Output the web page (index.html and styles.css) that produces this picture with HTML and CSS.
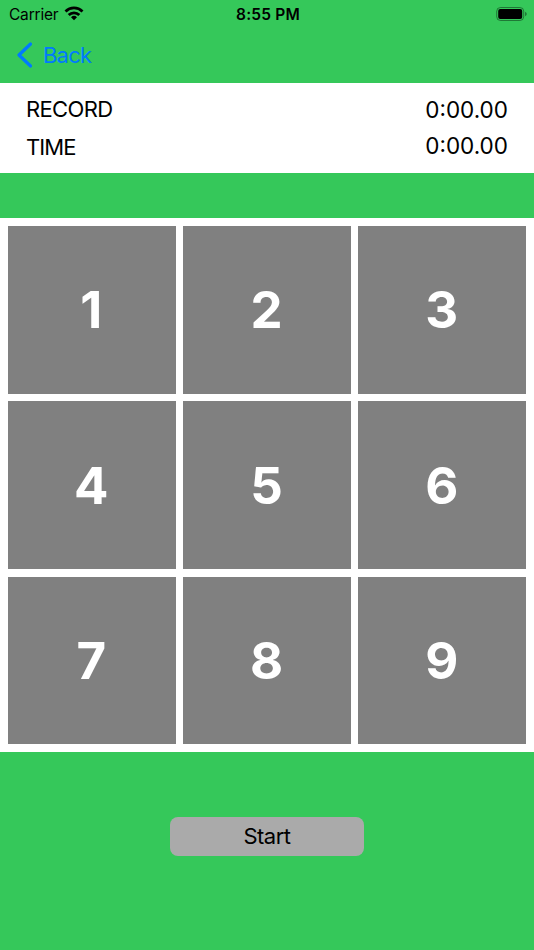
FILE: index.html
```html
<!DOCTYPE html>
<html lang="en">
<head>
<meta charset="utf-8">
<title>Record</title>
<link rel="stylesheet" href="styles.css">
</head>
<body>
<header class="status">
  <div class="carrier"><span class="carrier-name">Carrier</span>
    <svg class="wifi" width="20" height="15" viewBox="0 0 20 15"><path d="M10 14.2 7 11.2a4.3 4.3 0 0 1 6 0Z"/><path class="arc" d="M4.7 9a7.5 7.5 0 0 1 10.6 0M1.5 5.4a12.1 12.1 0 0 1 17 0"/></svg>
  </div>
  <div class="clock">8:55 PM</div>
  <svg class="battery" width="31" height="14" viewBox="0 0 31 14"><rect class="shell" x=".7" y=".5" width="27" height="13" rx="3.8"/><rect x="2.2" y="2" width="24" height="10" rx="2"/><path class="tip" d="M29 4.7q1.8.7 1.8 2.3T29 9.3Z"/></svg>
</header>
<nav class="nav"><a class="back"><svg width="16" height="26" viewBox="0 0 16 26"><path d="M14.5 2 3 13l11.5 11"/></svg><span>Back</span></a></nav>
<section class="scores">
  <div class="row"><span class="label">RECORD</span><span class="value">0:00.00</span></div>
  <div class="row"><span class="label time">TIME</span><span class="value">0:00.00</span></div>
</section>
<main class="grid">
  <div class="tile">1</div><div class="tile">2</div><div class="tile">3</div>
  <div class="tile">4</div><div class="tile">5</div><div class="tile">6</div>
  <div class="tile">7</div><div class="tile">8</div><div class="tile">9</div>
</main>
<button class="start">Start</button>
</body>
</html>
```
FILE: styles.css
```css
* { box-sizing: border-box; }
body { margin: 0; height: 950px; overflow: hidden; background: #35c85a; color: #000; font-family: Inter, sans-serif; display: flex; flex-direction: column; }
.status { height: 27px; padding: 0 7px 0 9px; display: grid; grid-template-columns: 1fr auto 1fr; align-items: center; font-size: 15.5px; }
.carrier { display: flex; align-items: center; gap: 6px; }
.carrier-name { padding-top: 1px; letter-spacing: -.2px; }
.wifi { margin-top: -1px; }
.wifi .arc { fill: none; stroke: #000; stroke-width: 2.8; }
.clock { padding-top: 1px; font-weight: 600; letter-spacing: .2px; }
.battery { justify-self: end; }
.battery .shell { fill: none; stroke: #000; stroke-opacity: .4; }
.battery .tip { fill-opacity: .4; }
.nav { height: 56px; padding: 0 16px; display: flex; align-items: center; }
.back { display: flex; align-items: center; gap: 11px; color: #007aff; font-size: 22px; letter-spacing: -.8px; }
.back svg { fill: none; stroke: #007aff; stroke-width: 3.2; stroke-linecap: round; stroke-linejoin: round; }
.back span { margin-top: -1px; }
.scores { height: 90px; padding: 8px 26px; background: #fff; }
.row { height: 36.5px; display: flex; align-items: center; justify-content: space-between; font-size: 22px; }
.label { letter-spacing: -.65px; }
.time { padding-top: 2px; letter-spacing: -.9px; }
.value { font-size: 22.5px; }
.grid { margin-top: 45px; height: 534px; padding: 8px 8px 7.5px; display: grid; grid-template-columns: repeat(3, 1fr); grid-template-rows: repeat(3, 1fr); gap: 7.6px; background: #fff; }
.tile { display: flex; align-items: center; justify-content: center; padding: 0 1px 0 0; background: #808080; color: #fff; font-size: 51px; font-weight: 700; }
.start { align-self: center; margin-top: 65px; width: 194px; height: 39px; padding: 0 0 1px; border: 0; border-radius: 8px; background: #aaa; color: #000; font: 22px Inter, sans-serif; letter-spacing: -.5px; }
```
